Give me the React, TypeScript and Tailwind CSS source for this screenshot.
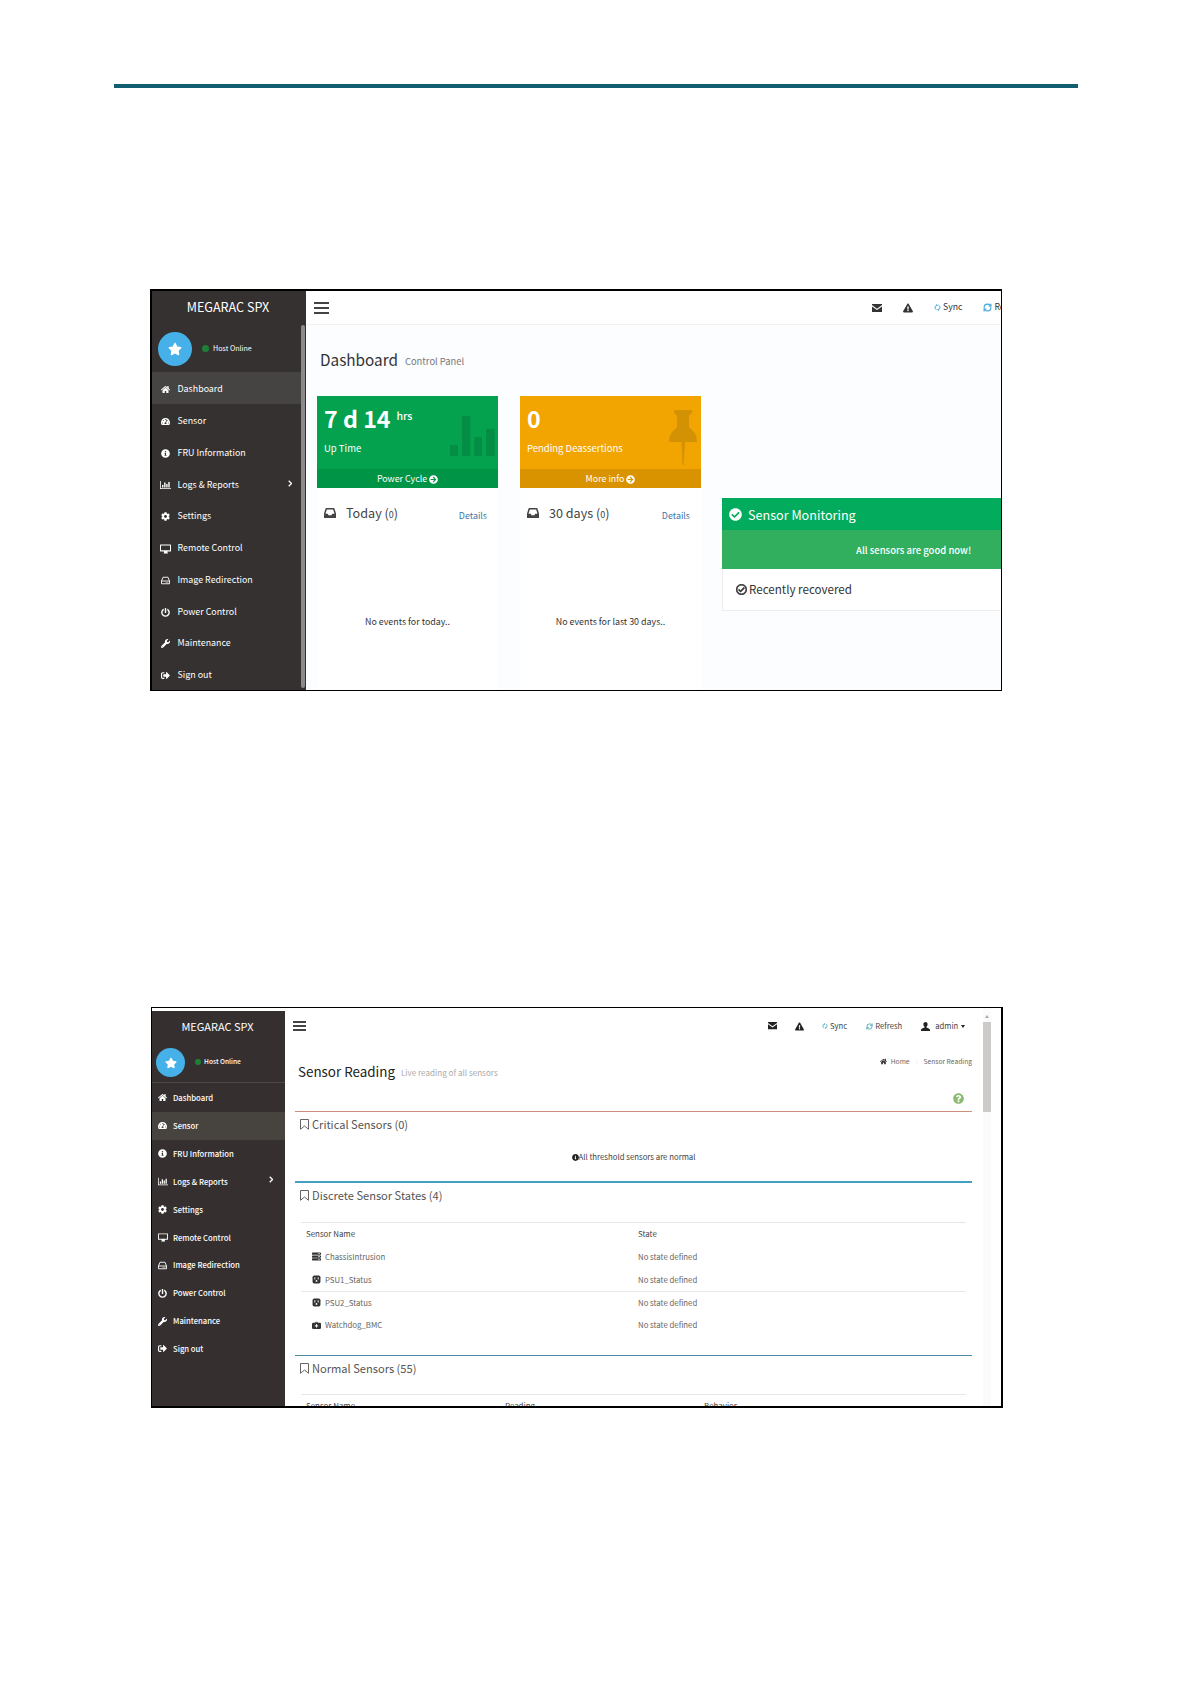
import type { ReactNode } from 'react';
import clsx from 'clsx';
import { RefreshCw } from 'lucide-react';
import {
    FaArrowCircleRight,
    FaCheckCircle,
    FaCog,
    FaExclamationTriangle,
    FaHome,
    FaInfoCircle,
    FaPowerOff,
    FaQuestionCircle,
    FaRegCheckCircle,
    FaServer,
    FaSignOutAlt,
    FaStar,
    FaTachometerAlt,
    FaWrench,
} from 'react-icons/fa';

type IconProps = { className?: string };

const ChartIcon = ({ className }: IconProps) => (
    <svg viewBox="0 0 22 16" fill="currentColor" className={className}>
        <path d="M0 0h1.600v14.400H22V16H0z" />
        <path d="M4 8h2.800v5H4zM8.200 3H11v10H8.200zM12.400 6h2.800v7h-2.800zM16.600 2h2.800v11h-2.800z" />
    </svg>
);

const ScreenIcon = ({ className }: IconProps) => (
    <svg viewBox="0 0 22 18" fill="currentColor" className={className}>
        <path fillRule="evenodd" d="M1 0h20a1 1 0 0 1 1 1v12a1 1 0 0 1-1 1h-6v2l1 2H7l1-2v-2H1a1 1 0 0 1-1-1V1a1 1 0 0 1 1-1zm1 2v9.500h18V2z" />
    </svg>
);

const DriveIcon = ({ className }: IconProps) => (
    <svg viewBox="0 0 18 16" fill="none" stroke="currentColor" strokeWidth="1.800" className={className}>
        <path d="M1 9l3-7.500h10L17 9v5.500H1zM1 9h16" />
        <path d="M9.500 12h1.500M13 12h1.500" />
    </svg>
);

const InboxIcon = ({ className }: IconProps) => (
    <svg viewBox="0 0 24 20" fill="currentColor" className={className}>
        <path fillRule="evenodd" d="M4.500 0h15q1 0 1.400 1L24 11v8q0 1-1 1H1q-1 0-1-1v-8L3.100 1Q3.500 0 4.500 0zm1.200 3L3 11.500h4.500L9 14.500h6l1.500-3H21L18.300 3z" />
    </svg>
);

const EnvelopeIcon = ({ className }: IconProps) => (
    <svg viewBox="0 0 20 16" fill="currentColor" className={className}>
        <path d="M0 0h20v2.200l-10 7.300L0 2.200z" />
        <path d="M0 5l10 7 10-7v11H0z" />
    </svg>
);

const BookmarkIcon = ({ className }: IconProps) => (
    <svg viewBox="0 0 18 22" fill="none" stroke="currentColor" strokeWidth="1.800" className={className}>
        <path d="M1 1h16v19.500l-8-6.500-8 6.500z" />
    </svg>
);

const UserIcon = ({ className }: IconProps) => (
    <svg viewBox="0 0 18 18" fill="currentColor" className={className}>
        <path d="M9 0c2.700 0 4.200 1.900 4.200 4.600 0 2-.9 4-2.200 5v1.600c1 .9 7 2 7 5V18H0v-1.800c0-3 6-4.100 7-5V9.600c-1.300-1-2.200-3-2.200-5C4.800 1.900 6.300 0 9 0z" />
    </svg>
);

// Circular two-arc arrow, bolder and more compact than the refresh one
const SyncIcon = ({ className }: IconProps) => (
    <svg viewBox="0 0 14 14" fill="none" stroke="currentColor" strokeWidth="2" className={className}>
        <path d="M5 2.500Q2 4 2 7t3 4.500M9 2.500Q12 4 12 7t-3 4.500" />
        <path d="M4.500 0L8 2.500 4.500 5zM9.500 9L6 11.500 9.500 14z" fill="currentColor" stroke="none" />
    </svg>
);

const SocketIcon = ({ className }: IconProps) => (
    <svg viewBox="0 0 16 14" className={className}>
        <rect x="1" width="14" height="14" rx="3" fill="currentColor" />
        <path d="M5 3v4M11 3v4" stroke="#fff" strokeWidth="1.600" />
        <path d="M6.500 11V9.500a1.500 1.500 0 0 1 3 0V11z" fill="#fff" />
    </svg>
);

const MedkitIcon = ({ className }: IconProps) => (
    <svg viewBox="0 0 18 14" className={className}>
        <path d="M7 2V.8h4V2" fill="none" stroke="currentColor" strokeWidth="1.600" />
        <rect y="1.500" width="18" height="12.500" rx="2.500" fill="currentColor" />
        <path d="M9 4.200v7M5.500 7.700h7" stroke="#fff" strokeWidth="2" />
    </svg>
);

const BarsIcon = ({ className }: IconProps) => (
    <svg viewBox="0 0 45 40" fill="currentColor" className={className}>
        <path d="M0 29h8v11H0zM12 0h8.300v40H12zM24.300 21H32v19h-7.700zM36 13h8.700v27H36z" />
    </svg>
);

const PinIcon = ({ className }: IconProps) => (
    <svg viewBox="0 0 28 55" fill="currentColor" className={className}>
        <path d="M6 0h16q1 0 1 1.500T22 4q-2 1-2 2v10q0 2 2.500 3.500Q28 24 28 32H16l-1.500 23h-1L12.500 32H0q0-8 5.500-12.500Q8 18 8 16V6q0-1-2-2-1-1-1-2.500T6 0z" />
    </svg>
);

const menu = [
    { label: 'Dashboard', icon: FaHome },
    { label: 'Sensor', icon: FaTachometerAlt },
    { label: 'FRU Information', icon: FaInfoCircle },
    { label: 'Logs & Reports', icon: ChartIcon, wide: true, expandable: true },
    { label: 'Settings', icon: FaCog },
    { label: 'Remote Control', icon: ScreenIcon, wide: true },
    { label: 'Image Redirection', icon: DriveIcon },
    { label: 'Power Control', icon: FaPowerOff },
    { label: 'Maintenance', icon: FaWrench },
    { label: 'Sign out', icon: FaSignOutAlt },
];

const Chevron = ({ className }: IconProps) => (
    <svg viewBox="0 0 6 10" fill="none" stroke="currentColor" strokeWidth="1.800" className={className}>
        <path d="M1 1l4 4-4 4" />
    </svg>
);

const Sidebar = ({ active, compact }: { active: string; compact?: boolean }) => (
    <aside className={clsx('flex shrink-0 text-white', compact ? 'mt-[3px] w-[133px] bg-[#35302f]' : 'w-[154px] bg-[#343130]')}>
        <div className="flex flex-1 flex-col">
            <div className={clsx('flex items-center justify-center', compact ? 'h-8 pr-[2px] pb-[2px] text-[11px]' : 'h-[34px] pb-px pl-[3px] text-[12.6px]')}>
                MEGARAC SPX
            </div>
            <div className={clsx('flex items-center', compact ? 'h-[39px] pb-[2px] pl-1' : 'h-12 pl-1.5')}>
                <div className={clsx('flex items-center justify-center rounded-full bg-[#45b1e8]', compact ? 'mt-0.5 size-[29px]' : 'size-[34px]')}>
                    <FaStar className={compact ? 'size-[12px]' : 'size-[14px]'} />
                </div>
                <span className={clsx('rounded-full bg-[#1f8035]', compact ? 'ml-2.5 size-1.5' : 'ml-2.5 size-[7px]')} />
                <span className={compact ? 'ml-[3px] text-[6.6px] font-medium' : 'ml-1 text-[7.1px]'}>Host Online</span>
            </div>
            {compact && <div className="h-px bg-[#4d4947]" />}
            <nav className={compact ? 'pt-px' : undefined}>
                {menu.map(({ label, icon: Icon, wide, expandable }) => (
                    <a
                        key={label}
                        className={clsx(
                            'flex items-center',
                            compact ? 'h-[27.9px] pl-1.5 text-[7.7px] font-medium' : 'h-[31.770px] pt-[3px] pl-2 text-[8.9px]',
                            label === active && (compact ? 'bg-[#47433f]' : 'bg-[#464443]'),
                        )}
                    >
                        <span className={clsx('flex items-center', compact ? 'w-[15px]' : 'w-[17.5px]')}>
                            <Icon className={clsx(wide ? (compact ? 'h-[9px] w-[10px]' : 'h-[10px] w-[11px]') : compact ? 'size-[9px]' : 'ml-px size-[9px]')} />
                        </span>
                        {label}
                        {expandable && <Chevron className={clsx('mb-1 ml-auto h-[7px]', compact ? 'mr-[12px]' : 'mr-[9px]')} />}
                    </a>
                ))}
            </nav>
        </div>
        {!compact && <div className="mt-[34px] mr-[1px] mb-[2px] w-1 rounded-full bg-[#8b8989]" />}
    </aside>
);

const Hamburger = ({ compact }: { compact?: boolean }) => (
    <div className={clsx('flex shrink-0 flex-col', compact ? 'w-[13px] gap-[2px]' : 'w-[15px] gap-[3px]')}>
        <div className="h-[2px] bg-[#444]" />
        <div className="h-[2px] bg-[#444]" />
        <div className="h-[2px] bg-[#444]" />
    </div>
);

type StatCardProps = { tone: 'green' | 'orange'; value: string; unit?: string; label: string; link: string; icon: ReactNode };

const StatCard = ({ tone, value, unit, label, link, icon }: StatCardProps) => (
    <div className={clsx('flex h-[92px] flex-col text-white', tone === 'green' ? 'bg-[#04a24e]' : 'bg-[#f2a400]')}>
        <div className="flex h-[73px] justify-between pl-[7px]">
            <div>
                <div className="mt-[7px] flex h-[31px] items-center text-[23.2px] font-bold">
                    {value}
                    {unit && <span className="mb-1 ml-1.5 text-[10.6px] font-medium">{unit}</span>}
                </div>
                <div className="mt-[6px] h-4 text-[9.5px] leading-4">{label}</div>
            </div>
            {icon}
        </div>
        <div className={clsx('flex h-[19px] items-center justify-center gap-0.5 pt-[2px] text-[8.9px]', tone === 'green' ? 'bg-[#009446]' : 'bg-[#da9300]')}>
            {link} <FaArrowCircleRight className="size-[9px]" />
        </div>
    </div>
);

const EventPanel = ({ title, message }: { title: string; message: string }) => (
    <div className="h-[202px] bg-white">
        <div className="flex h-[51px] items-center pr-[11px] pl-[7px] text-[#444]">
            <InboxIcon className="mb-px h-[10px] w-3" />
            <span className="ml-2.5 text-[12.6px]">
                {title} (<span className="text-[9px]">0</span>)
            </span>
            <span className="mt-[5px] ml-auto text-[8.9px] text-[#3c76a8]">Details</span>
        </div>
        <p className="mt-[75px] h-4 text-center text-[8.9px] leading-4 text-[#333]">{message}</p>
    </div>
);

const DashboardScreen = () => (
    <section className="mt-[201px] ml-[150px] flex h-[402px] w-[852px] overflow-hidden border-t-2 border-r border-b border-l-2 border-black">
        <Sidebar active="Dashboard" />
        <div className="flex w-[695px] shrink-0 flex-col overflow-hidden bg-[#fcfdff]">
            <header className="flex h-[34px] shrink-0 items-center border-b border-[#f1f1f1] bg-white pl-2 text-[8.7px] whitespace-nowrap text-[#333]">
                <Hamburger />
                <EnvelopeIcon className="ml-[543px] w-[10px] shrink-0" />
                <FaExclamationTriangle className="ml-[21px] size-[10px] shrink-0" />
                <SyncIcon className="ml-[21px] size-[7px] shrink-0 text-[#3da5dc]" />
                <span className="ml-0.5">Sync</span>
                <RefreshCw className="ml-[21px] size-[9px] shrink-0 text-[#3da5dc]" strokeWidth={3} />
                <span className="ml-0.5">Refresh</span>
            </header>
            <div className="flex h-[71px] shrink-0 items-center pt-[2px] pl-[14px] text-[#333]">
                <h1 className="mb-1 text-[15.3px]">Dashboard</h1>
                <span className="ml-[7px] text-[9.4px] text-[#777]">Control Panel</span>
            </div>
            <div className="flex pl-[11px]">
                <div className="w-[181px] shrink-0">
                    <StatCard
                        tone="green"
                        value="7 d 14"
                        unit="hrs"
                        label="Up Time"
                        link="Power Cycle"
                        icon={<BarsIcon className="mt-[20px] mr-[3px] h-[40px] w-[45px] text-[#048d44]" />}
                    />
                    <EventPanel title="Today" message="No events for today.." />
                </div>
                <div className="ml-[22px] w-[181px] shrink-0">
                    <StatCard
                        tone="orange"
                        value="0"
                        label="Pending Deassertions"
                        link="More info"
                        icon={<PinIcon className="mt-[14px] mr-1 h-[55px] w-[28px] text-[#d39104]" />}
                    />
                    <EventPanel title="30 days" message="No events for last 30 days.." />
                </div>
                <div className="mt-[102px] ml-[21px] w-[318px] shrink-0">
                    <div className="flex h-8 items-center bg-[#03ab5c] pt-[2px] pl-[7px] text-[12.6px] text-white">
                        <FaCheckCircle className="mr-[6px] mb-0.5 size-[13px]" />
                        Sensor Monitoring
                    </div>
                    <div className="flex h-[39px] items-center bg-[#31af5f] pt-[3px] pl-[134px] text-[9.5px] font-medium text-white">All sensors are good now!</div>
                    <div className="flex h-[42px] items-center border-b border-l border-[#eee] bg-white pl-[13px] text-[11.6px] text-[#333]">
                        <FaRegCheckCircle className="mr-[2px] size-[11px]" strokeWidth={30} stroke="currentColor" />
                        Recently recovered
                    </div>
                </div>
            </div>
        </div>
    </section>
);

const discreteSensors = [
    { name: 'ChassisIntrusion', icon: FaServer },
    { name: 'PSU1_Status', icon: SocketIcon },
    { name: 'PSU2_Status', icon: SocketIcon },
    { name: 'Watchdog_BMC', icon: MedkitIcon },
];

const PanelTitle = ({ children }: { children: ReactNode }) => (
    <h2 className="flex h-[25px] items-center pl-[5px] text-[11.1px] text-[#555]">
        <BookmarkIcon className="mr-[3px] h-[11px] w-[9px]" />
        {children}
    </h2>
);

const SensorScreen = () => (
    <section className="mt-[316px] ml-[151px] flex h-[401px] w-[852px] overflow-hidden border-t border-r-2 border-b-2 border-l border-black bg-white">
        <Sidebar active="Sensor" compact />
        <div className="flex h-[398px] w-[687px] flex-col overflow-hidden pl-[10px] text-[7.8px] text-[#444]">
            <header className="-ml-[2px] flex h-[36px] shrink-0 items-center text-[7.7px] whitespace-nowrap">
                <Hamburger compact />
                <EnvelopeIcon className="ml-[462px] w-[9px] text-[#222]" />
                <FaExclamationTriangle className="ml-[18px] size-[9px] text-[#222]" />
                <SyncIcon className="ml-[18px] size-[6px] text-[#45b3c5]" />
                <span className="ml-0.5">Sync</span>
                <RefreshCw className="ml-[19px] size-[7px] text-[#45a3b5]" strokeWidth={3} />
                <span className="ml-0.5">Refresh</span>
                <UserIcon className="ml-[19px] size-[9px] text-[#222]" />
                <span className="ml-[5px]">admin</span>
                <span className="ml-[3px] border-x-[2.5px] border-t-[3px] border-x-transparent border-t-[#222]" />
            </header>
            <div className="flex h-[54px] shrink-0 pl-[3px]">
                <h1 className="mt-[16px] h-[22px] text-[13.4px] leading-[22px] text-[#222]">Sensor Reading</h1>
                <span className="mt-[21px] ml-1.5 h-4 text-[8.1px] leading-4 text-[#aaa]">Live reading of all sensors</span>
                <div className="mt-[10px] ml-auto flex h-[14px] items-center text-[6.7px] text-[#666]">
                    <FaHome className="mr-1 size-[7px] text-[#333]" />
                    Home
                    <span className="mx-1.5 text-[#ddd]">›</span>
                    Sensor Reading
                </div>
            </div>
            <FaQuestionCircle className="mt-[-5px] mb-[7px] ml-[658px] size-[11px] shrink-0 text-[#8bbb70]" />
            <div className="h-[70px] w-[677px] shrink-0 border-t border-[#cf8d7b]">
                <PanelTitle>Critical Sensors (0)</PanelTitle>
                <p className="mt-[12px] flex h-4 items-center justify-center">
                    <FaInfoCircle className="size-[7px] text-[#222]" />
                    All threshold sensors are normal
                </p>
            </div>
            <div className="h-[174px] w-[677px] shrink-0 border-t-2 border-[#45a0c0]">
                <PanelTitle>Discrete Sensor States (4)</PanelTitle>
                <div className="mx-[6px] mt-[14px] border-t border-[#e6e6e6]">
                    <div className="flex h-[23px] items-center pb-px pl-[5px] text-[7.9px]">
                        <span className="w-[332px]">Sensor Name</span>
                        <span>State</span>
                    </div>
                    {discreteSensors.map(({ name, icon: Icon }, i) => (
                        <div key={name} className={clsx('flex h-[22.8px] items-center border-b pl-[11px] text-[#666]', i === 1 ? 'border-[#e8e8e8]' : 'border-transparent')}>
                            <Icon className="mr-[4px] size-[9px] text-[#333]" />
                            <span className="w-[313px]">{name}</span>
                            <span>No state defined</span>
                        </div>
                    ))}
                </div>
            </div>
            <div className="w-[677px] shrink-0 border-t border-[#4c8ba5]">
                <PanelTitle>Normal Sensors (55)</PanelTitle>
                <div className="mx-[6px] mt-[13px] flex h-[22px] items-center border-t border-[#e6e6e6] pl-[5px] text-[7.9px]">
                    <span className="w-[199px]">Sensor Name</span>
                    <span className="w-[199px]">Reading</span>
                    <span>Behavior</span>
                </div>
            </div>
        </div>
        <div className="ml-[11px] flex w-2 flex-col items-center bg-[#fbfbfb] pt-[7px]">
            <span className="mb-1 border-x-[2.5px] border-b-[3px] border-x-transparent border-b-[#aaa]" />
            <div className="h-[90px] w-2 bg-[#cccbc9]" />
        </div>
    </section>
);

export default function App() {
    return (
        <main className="h-[1684px] w-[1191px] overflow-hidden bg-white pt-[84px] font-['Noto_Sans_CJK_SC',sans-serif] leading-none">
            <div className="ml-[114px] h-1 w-[964px] bg-[#115e70]" />
            <DashboardScreen />
            <SensorScreen />
        </main>
    );
}
